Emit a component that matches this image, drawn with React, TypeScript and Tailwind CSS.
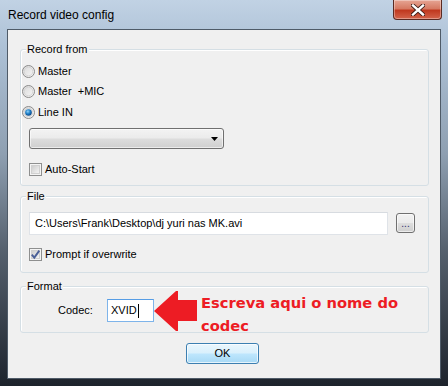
import React from "react";

const ui = { fontFamily: '"Liberation Sans", Arial, sans-serif' };

function Group({
  label,
  className,
  children,
}: {
  label: string;
  className: string;
  children: React.ReactNode;
}) {
  return (
    <div
      className={
        "relative rounded-[3px] border border-[#d5dfe5] shadow-[inset_1px_1px_0_#ffffff] " +
        className
      }
    >
      <span className="absolute left-[5px] -top-[8px] bg-[#f0f0f0] px-[1px] text-[11px] leading-[14px] text-black">
        {label}
      </span>
      {children}
    </div>
  );
}

function Radio({ checked }: { checked?: boolean }) {
  return (
    <svg width="13" height="13" viewBox="0 0 13 13" className="shrink-0">
      <defs>
        <linearGradient id="rb" x1="0" y1="0" x2="1" y2="1">
          <stop offset="0" stopColor="#d8d8d8" />
          <stop offset="1" stopColor="#f8f8f8" />
        </linearGradient>
        <radialGradient id="rd" cx="0.4" cy="0.35" r="0.7">
          <stop offset="0" stopColor="#8fd2f8" />
          <stop offset="0.5" stopColor="#1c7ec8" />
          <stop offset="1" stopColor="#0a3e7a" />
        </radialGradient>
      </defs>
      <circle cx="6.5" cy="6.5" r="6" fill="url(#rb)" stroke="#8b8b8b" strokeWidth="1" />
      <circle cx="6.5" cy="6.5" r="4.3" fill="none" stroke="#cfcfcf" strokeWidth="0.8" />
      {checked && <circle cx="6.5" cy="6.5" r="3.3" fill="url(#rd)" />}
    </svg>
  );
}

function Check({ checked }: { checked?: boolean }) {
  return (
    <svg width="13" height="13" viewBox="0 0 13 13" className="shrink-0">
      <defs>
        <linearGradient id="cb" x1="0" y1="0" x2="1" y2="1">
          <stop offset="0" stopColor="#cbcbcb" />
          <stop offset="1" stopColor="#f6f6f6" />
        </linearGradient>
      </defs>
      <rect x="0.5" y="0.5" width="12" height="12" fill="#f4f4f4" stroke="#8e8f8f" />
      <rect x="2.5" y="2.5" width="8" height="8" fill="url(#cb)" stroke="#d0d0d0" />
      {checked && (
        <path
          d="M2.8 6.6 L5.3 9.6 L10.3 2.6"
          fill="none"
          stroke="#4a5f97"
          strokeWidth="1.9"
          strokeLinejoin="miter"
        />
      )}
    </svg>
  );
}

export default function App() {
  return (
    <div
      className="relative w-[448px] h-[386px] overflow-hidden bg-[linear-gradient(180deg,#c1d2e4_0%,#adc1d6_12%,#8e9fb1_40%,#55606d_65%,#1d232c_100%)]"
      style={ui}
    >
      {/* Title bar */}
      <div className="flex h-[29px] items-start">
        <span className="ml-[8px] mt-[8px] text-[12px] leading-[14px] text-black">
          Record video config
        </span>
        <div className="ml-auto mr-[6px] flex h-[20px] w-[49px] items-center justify-center rounded-b-[4px] border border-t-0 border-[#5a2a22] bg-[linear-gradient(180deg,#e6a594_0%,#d67a63_45%,#c0391f_55%,#d3644b_100%)] shadow-[inset_0_0_0_1px_rgba(255,255,255,0.35)]">
          <svg width="14" height="12" viewBox="0 0 14 12">
            <path
              d="M2 1.5 L12 10.5 M12 1.5 L2 10.5"
              stroke="#3b1a14"
              strokeWidth="4.2"
              strokeLinecap="square"
            />
            <path
              d="M2 1.5 L12 10.5 M12 1.5 L2 10.5"
              stroke="#ffffff"
              strokeWidth="2.4"
              strokeLinecap="square"
            />
          </svg>
        </div>
      </div>

      {/* Client area */}
      <div className="mx-[7px] h-[350px] border border-[#4f5b68] bg-[#f0f0f0] text-[11px] text-black">
        {/* Record from */}
        <Group label="Record from" className="ml-[12px] mt-[19px] h-[137px] w-[409px]">
          <div className="flex flex-col pl-[1px] pt-[11px]">
            <div className="flex h-[20px] items-center">
              <Radio />
              <span className="ml-[3px]">Master</span>
            </div>
            <div className="flex h-[21px] items-center">
              <Radio />
              <span className="ml-[3px]">Master&nbsp;&nbsp;+MIC</span>
            </div>
            <div className="flex h-[20px] items-center">
              <Radio checked />
              <span className="ml-[3px]">Line IN</span>
            </div>
          </div>
          <div className="ml-[8px] mt-[6px] flex h-[21px] w-[195px] items-center justify-end rounded-[3px] border border-[#707070] bg-[linear-gradient(180deg,#f3f3f3_0%,#ebebeb_48%,#dddddd_52%,#cfcfcf_100%)] pr-[5px] shadow-[inset_0_0_0_1px_rgba(255,255,255,0.6)]">
            <svg width="7" height="4" viewBox="0 0 7 4">
              <path d="M0 0 H7 L3.5 4 Z" fill="#000" />
            </svg>
          </div>
          <div className="ml-[8px] mt-[10px] flex h-[20px] items-center">
            <Check />
            <span className="ml-[3px]">Auto-Start</span>
          </div>
        </Group>

        {/* File */}
        <Group label="File" className="ml-[12px] mt-[10px] h-[77px] w-[409px]">
          <div className="ml-[8px] mt-[15px] flex items-start">
            <div className="flex h-[23px] w-[359px] items-center border border-[#dfe3e8] border-t-[#d7dbe0] bg-white pl-[5px]">
              C:\Users\Frank\Desktop\dj yuri nas MK.avi
            </div>
            <div className="ml-[8px] mt-[1px] flex h-[20px] w-[19px] items-end justify-center rounded-[3px] border border-[#707070] bg-[linear-gradient(180deg,#f2f2f2_0%,#ebebeb_48%,#dddddd_52%,#cfcfcf_100%)] pb-[3px] text-[10px] leading-[10px] text-[#2a2a6a] shadow-[inset_0_0_0_1px_rgba(255,255,255,0.6)]">
              ...
            </div>
          </div>
          <div className="ml-[8px] mt-[9px] flex h-[20px] items-center">
            <Check checked />
            <span className="ml-[3px]">Prompt if overwrite</span>
          </div>
        </Group>

        {/* Format */}
        <Group label="Format" className="ml-[12px] mt-[13px] h-[47px] w-[409px]">
          <div className="mt-[12px] flex items-center pl-[37px]">
            <span className="w-[49px]">Codec:</span>
            <div className="flex h-[23px] w-[47px] items-center border border-[#7eb4ea] border-t-[#569de5] bg-white pl-[3px]">
              XVID
              <span className="ml-[1px] inline-block h-[14px] w-[1px] bg-black" />
            </div>
          </div>
          {/* annotation */}
          <svg
            className="absolute left-[132px] top-[3px]"
            width="46"
            height="43"
            viewBox="0 0 46 43"
          >
            <polygon
              points="1,21 23,1 25,1 25,10 44,10 44,31 25,31 25,41 23,41"
              fill="#ed1c24"
            />
          </svg>
          <div
            className="absolute left-[180px] top-[4px] whitespace-nowrap text-[14.7px] font-bold leading-[23px] text-[#ed1c24]"
            style={{ fontFamily: '"DejaVu Sans", Verdana, sans-serif' }}
          >
            Escreva aqui o nome do
            <br />
            codec
          </div>
        </Group>

        {/* OK */}
        <div className="ml-[178px] mt-[10px] flex h-[21px] w-[73px] items-center justify-center rounded-[3px] border border-[#3c7fb1] bg-[linear-gradient(180deg,#eaf6fd_0%,#d9f0fc_48%,#bee6fd_52%,#a7d9f5_100%)] shadow-[inset_0_0_0_1px_rgba(255,255,255,0.7)]">
          OK
        </div>
      </div>
    </div>
  );
}
